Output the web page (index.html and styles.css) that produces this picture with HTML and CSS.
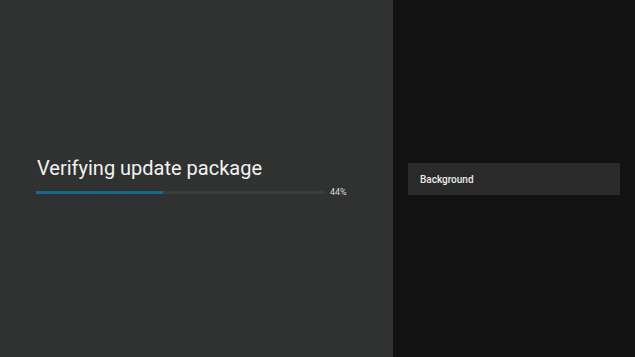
FILE: index.html
```html
<!DOCTYPE html>
<html lang="en">
<head>
  <meta charset="UTF-8" />
  <title>System update</title>
  <link rel="stylesheet" href="styles.css">
</head>
<body>
  <div class="screen">
    <div class="main">
      <h1>Verifying update package</h1>
      <div class="progress-row">
        <div class="track"><div class="fill" style="width: 44%"></div></div>
        <span class="percent">44%</span>
      </div>
    </div>
    <div class="side">
      <button class="action">Background</button>
    </div>
  </div>
</body>
</html>
```

FILE: styles.css
```css
body {
  margin: 0;
  font-family: Roboto, 'Noto Sans', sans-serif;
  background: #121212;
}

.screen {
  display: flex;
  width: 635px;
  height: 357px;
}

.main {
  width: 393px;
  background: #303231;
  display: flex;
  flex-direction: column;
  justify-content: center;
  padding: 0 0 4px 36px;
  box-sizing: border-box;
}

h1 {
  margin: 0 0 7px 1px;
  font-size: 20px;
  font-weight: 400;
  color: #f2f2f2;
  line-height: 24px;
}

.progress-row {
  display: flex;
  align-items: center;
}

.track {
  width: 289px;
  height: 3px;
  background: #3b3d3c;
}

.fill {
  height: 100%;
  background: #15688f;
}

.percent {
  margin-left: 5px;
  font-size: 9px;
  color: #d8d8d8;
}

.side {
  flex: 1;
  background: #121212;
  display: flex;
  flex-direction: column;
  justify-content: center;
  padding: 0 15px;
}

.action {
  height: 32px;
  width: 212px;
  border: none;
  background: #2a2a2a;
  color: #ececec;
  font-family: Roboto, 'Noto Sans', sans-serif;
  font-size: 10px;
  font-weight: 500;
  text-align: left;
  padding: 2px 12px 0;
  margin-top: 0;
}
```
